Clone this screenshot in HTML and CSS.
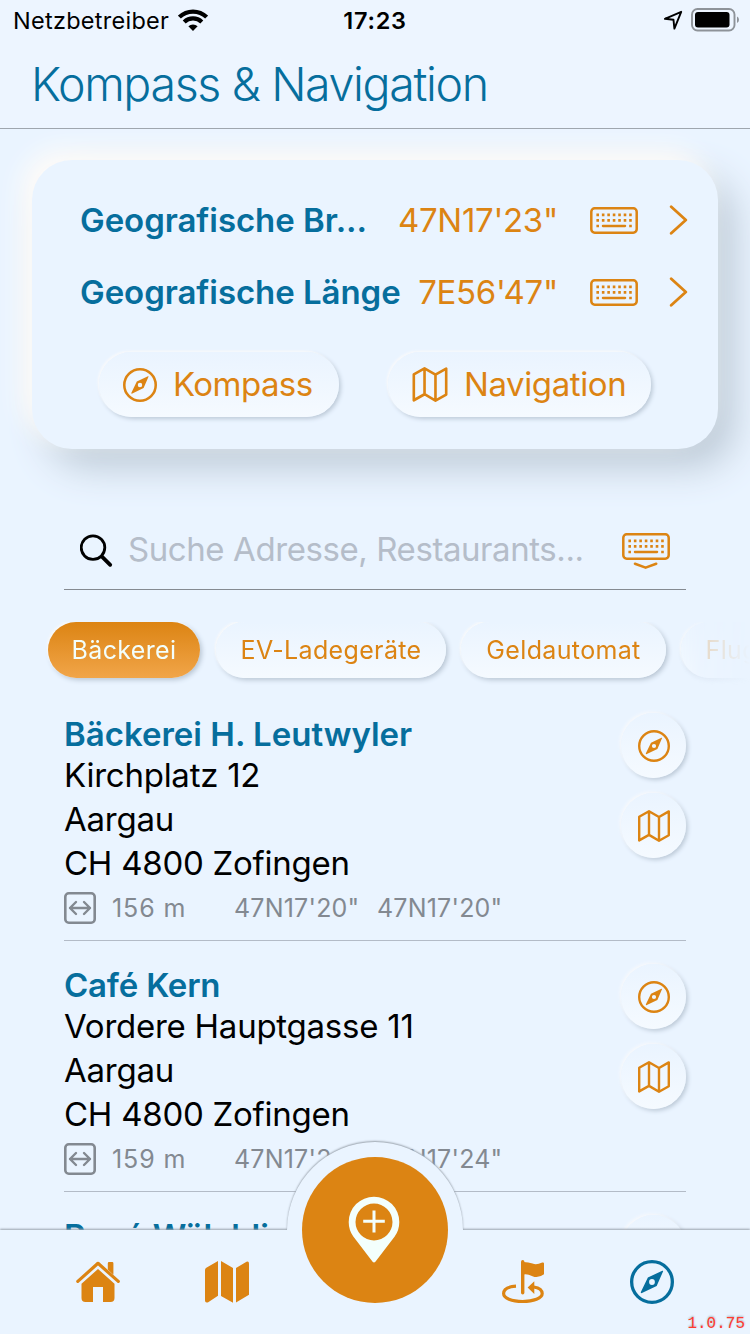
FILE: index.html
```html
<!DOCTYPE html>
<html lang="de">
<head>
<meta charset="utf-8">
<title>Kompass &amp; Navigation</title>
<link rel="stylesheet" href="styles.css">
</head>
<body>
<svg class="defs" width="0" height="0">
  <symbol id="compass" viewBox="0 0 32 32">
    <circle cx="16" cy="16" r="14.8" fill="none" stroke="currentColor" stroke-width="2.4"/>
    <path fill="currentColor" fill-rule="evenodd" d="M24.1 8.1 19.4 18.9 8.3 24.2Q7.6 24.1 7.9 23.3L13 12.8 23.5 7.8Q24.2 7.6 24.1 8.1ZM16 13.9a2.1 2.1 0 1 0 0 4.2 2.1 2.1 0 0 0 0-4.2Z"/>
  </symbol>
  <symbol id="map" viewBox="0 0 32 32">
    <path fill="none" stroke="currentColor" stroke-width="2.4" stroke-linejoin="round" d="M1.2 6.8 11 1.3l10 5.7L30.8 1.4v23.8L21 30.8l-10-5.9-9.8 5.500ZM11 1.3V25M21 7v23.8"/>
  </symbol>
  <symbol id="keyboard" viewBox="0 0 48 27">
    <rect x="1.3" y="1.3" width="45.4" height="24.4" rx="3.4" fill="none" stroke="currentColor" stroke-width="2.5"/>
    <path stroke="currentColor" stroke-width="2.7" stroke-dasharray="2.6 2.86" d="M6.4 7.9h35.6M6.4 13.4h35.6"/>
    <path stroke="currentColor" stroke-width="2.5" d="M6.4 19H9M39.2 19h2.6"/>
    <path stroke="currentColor" stroke-width="2.3" stroke-linecap="round" d="M12.9 19h22.2"/>
  </symbol>
  <symbol id="chevron" viewBox="0 0 18 30">
    <path fill="none" stroke="currentColor" stroke-width="2.8" stroke-linecap="round" stroke-linejoin="round" d="M1.7 1.7 16.3 15 1.7 28.2"/>
  </symbol>
  <symbol id="distance" viewBox="0 0 32 32">
    <rect x="1.3" y="1.3" width="29.4" height="29.4" rx="3.5" fill="none" stroke="currentColor" stroke-width="2.6"/>
    <path fill="none" stroke="currentColor" stroke-width="2.4" stroke-linecap="round" stroke-linejoin="round" d="M6 16h20M12 10 6 16l6 6M20 10l6 6-6 6"/>
  </symbol>
</svg>

<div class="screen">
  <header class="header">
    <div class="status">
      <div class="carrier"><span class="carrier-name">Netzbetreiber</span>
        <svg width="30" height="22" viewBox="0 0 30 22">
          <g fill="none" stroke="#000" stroke-width="4.2"><path d="M1.4 8.1a19.4 19.4 0 0 1 27.2 0"/><path d="M6.2 13a12.6 12.6 0 0 1 17.6 0"/></g>
          <path d="M10.4 17.3a6.6 6.6 0 0 1 9.2 0L15 21.9Z"/>
        </svg>
      </div>
      <div class="clock">17:23</div>
      <div class="indicators">
        <svg width="20" height="20" viewBox="0 0 20 20"><path fill="none" stroke="#000" stroke-width="1.9" stroke-linejoin="round" d="M18.2 1.8 1.9 8.8l8.6 1 .9 8.8Z"/></svg>
        <svg width="48" height="24" viewBox="0 0 48 24">
          <rect x="1" y="1" width="42.5" height="21.5" rx="5.5" fill="none" stroke="#8e9399" stroke-width="1.9"/>
          <rect x="4" y="4" width="34.5" height="15.5" rx="3"/>
          <path fill="#8e9399" d="M46 8.5q2 1 2 3.2t-2 3.2Z"/>
        </svg>
      </div>
    </div>
    <h1 class="title">Kompass &amp; Navigation</h1>
  </header>

  <main class="content">
    <section class="card">
      <div class="coord">
        <span class="coord-label">Geografische Br...</span><span class="coord-value">47N17'23"</span>
        <svg class="kbd"><use href="#keyboard"/></svg><svg class="chev"><use href="#chevron"/></svg>
      </div>
      <div class="coord">
        <span class="coord-label">Geografische Länge</span><span class="coord-value">7E56'47"</span>
        <svg class="kbd"><use href="#keyboard"/></svg><svg class="chev"><use href="#chevron"/></svg>
      </div>
      <div class="actions">
        <button class="pill kompass"><svg class="pill-icon"><use href="#compass"/></svg><span>Kompass</span></button>
        <button class="pill navigation"><svg class="pill-icon map"><use href="#map"/></svg><span>Navigation</span></button>
      </div>
    </section>

    <div class="search">
      <svg width="34" height="34" viewBox="0 0 34 34"><circle cx="13" cy="13.6" r="11.8" fill="none" stroke="#000" stroke-width="2.8"/><path stroke="#000" stroke-width="3.8" stroke-linecap="round" d="m22.2 22.8 8 8"/></svg>
      <span class="placeholder">Suche Adresse, Restaurants...</span>
      <svg class="kbd-down" width="48" height="37" viewBox="0 0 48 37"><use href="#keyboard" width="48" height="27"/><path fill="none" stroke="currentColor" stroke-width="2.6" stroke-linecap="round" stroke-linejoin="round" d="m13 30.8 10.6 3.8 10.6-3.8"/></svg>
    </div>

    <div class="chips">
      <span class="chip active">Bäckerei</span>
      <span class="chip ev">EV-Ladegeräte</span>
      <span class="chip atm">Geldautomat</span>
      <span class="chip airport">Flughafen</span>
    </div>

    <ul class="places">
      <li class="place">
        <div class="info">
          <h2 class="name">Bäckerei H. Leutwyler</h2>
          <p class="line">Kirchplatz 12</p><p class="line">Aargau</p><p class="line">CH 4800 Zofingen</p>
          <div class="meta"><svg class="dist"><use href="#distance"/></svg><span class="metres">156 m</span><span class="pos">47N17'20"</span><span class="pos">47N17'20"</span></div>
        </div>
        <div class="tools"><span class="round"><svg><use href="#compass"/></svg></span><span class="round"><svg><use href="#map"/></svg></span></div>
      </li>
      <li class="place">
        <div class="info">
          <h2 class="name short">Café Kern</h2>
          <p class="line">Vordere Hauptgasse 11</p><p class="line">Aargau</p><p class="line">CH 4800 Zofingen</p>
          <div class="meta"><svg class="dist"><use href="#distance"/></svg><span class="metres">159 m</span><span class="pos">47N17'24"</span><span class="pos">47N17'24"</span></div>
        </div>
        <div class="tools"><span class="round"><svg><use href="#compass"/></svg></span><span class="round"><svg><use href="#map"/></svg></span></div>
      </li>
      <li class="place">
        <div class="info"><h2 class="name">René Wälchli</h2></div>
        <div class="tools"><span class="round"></span></div>
      </li>
    </ul>
  </main>

  <nav class="tabs">
    <div class="bump"></div>
    <div class="tab"><svg width="44" height="42" viewBox="0 0 44 42">
      <path fill="none" stroke="currentColor" stroke-width="3.2" stroke-linecap="round" stroke-linejoin="round" d="M1.8 20.4 22 2.3l20.3 18.1"/>
      <path fill="currentColor" d="M31.8 8.6V2.2q0-1.2 1.2-1.2h3.2q1.2 0 1.2 1.2v11.500ZM22 8 38.500 22.800V37q0 4-4 4H27V26H17v15H9.500q-4 0-4-4V22.800Z"/>
    </svg></div>
    <div class="tab"><svg width="44" height="42" viewBox="0 0 44 42">
      <path fill="currentColor" d="M0 9Q0 7.4 1.3 6.7L13 0v34.7L3.2 41.2Q0 42.2 0 39.5ZM16 0l12 7v34.8l-12-6.9ZM31 7 41.5.8Q44-.2 44 2.7v31L31 41.6Z"/>
    </svg></div>
    <div class="fab"><svg width="52" height="68" viewBox="0 0 52 68">
      <path fill="#f3fffc" fill-rule="evenodd" d="M26 .7A25.3 25.3 0 0 0 .7 26q0 8 4.6 14.6L24.6 65.8q1.4 1.6 2.8 0L46.7 40.6Q51.3 34 51.3 26A25.3 25.3 0 0 0 26 .7ZM26 7.5a18.5 18.5 0 1 1 0 37 18.5 18.5 0 0 1 0-37Z"/>
      <path stroke="#f3fffc" stroke-width="3" d="M15.2 25.3h21.6M26 14.4v22"/>
    </svg></div>
    <div class="tab"><svg width="44" height="46" viewBox="0 0 44 46">
      <path fill="none" stroke="currentColor" stroke-width="3.4" stroke-linecap="round" d="M21.7 2.7v31"/>
      <path fill="currentColor" d="M22.500 3q5 0 9 1.600t9.700-1q1.800-.6 1.800 1v10.600q-6 4.500-11.500 2t-9-1.600ZM33.300 22.200v12.800L26.600 28.600Z"/>
      <path fill="none" stroke="currentColor" stroke-width="3.2" d="M15 27.2C7 27.6 2.6 30.500 2.6 34.600c0 4.600 8 7.900 19 7.900s19.600-3.300 19.600-7.900c0-3.500-3-5.700-8.500-6.600"/>
    </svg></div>
    <div class="tab current"><svg width="44" height="44"><use href="#compass"/></svg></div>
    <span class="version">1.0.75</span>
  </nav>
</div>
</body>
</html>
```
FILE: styles.css
```css
* { box-sizing: border-box; }
body { margin: 0; font-family: Inter, "Liberation Sans", sans-serif; color: #000; }
h1, h2, p, ul { margin: 0; padding: 0; font-weight: 400; }
svg { display: block; flex: none; }
.defs { position: absolute; }
.screen { position: relative; width: 750px; height: 1334px; overflow: hidden; background: #eaf4ff; display: flex; flex-direction: column; white-space: nowrap; }

.header { height: 129px; flex: none; background: #edf5ff; border-bottom: 1px solid #9fa6ae; position: relative; z-index: 1; }
.status { height: 40px; display: grid; grid-template-columns: 1fr auto 1fr; align-items: center; padding: 0 11px 0 13px; font-size: 23.5px; }
.carrier { display: flex; align-items: center; gap: 9px; letter-spacing: .27px; }
.clock { font-weight: 600; letter-spacing: .7px; margin-left: -2px; }
.indicators { display: flex; justify-content: flex-end; align-items: center; gap: 8px; }
.title { padding-left: 31px; font-size: 46.5px; line-height: 88px; font-weight: 300; letter-spacing: -1.34px; color: #066e9d; }

.content { height: 1101px; overflow: hidden; flex: none; padding-top: 31px; }
.card { width: 686px; height: 289px; margin-left: 32px; padding: 24px 30px 0 48px; border-radius: 40px; background: #eaf4ff; box-shadow: -10px -10px 26px #fffcf8, 16px 18px 38px #bcc9d6; }
.coord { height: 72px; display: flex; align-items: center; font-size: 33px; }
.coord-label { flex: 1; font-weight: 600; color: #066e9d; letter-spacing: -.06px; }
.coord-value { color: #dc8413; margin-right: 32px; letter-spacing: -.3px; }
.kbd { width: 48px; height: 27px; color: #dc8413; margin-right: 31px; }
.chev { width: 19px; height: 30px; color: #dc8413; }
.actions { display: flex; gap: 49px; padding: 24px 0 0 19px; }
.pill { width: 240px; height: 65px; border: 0; border-radius: 33px; padding: 0 0 0 24px; display: flex; align-items: center; gap: 16px; font: 400 33px Inter, sans-serif; letter-spacing: -.55px; color: #dc8413; background: linear-gradient(#eaf4ff, #f5faff); box-shadow: -1.5px -1.5px 2px #f7f9fc, 2px 2px 4px #bdcad8; }
.pill span { padding-bottom: 2px; }
.pill.navigation { width: 263px; gap: 16px; letter-spacing: -.4px; }
.pill-icon { width: 34px; height: 34px; }
.pill-icon.map { width: 36px; height: 35px; }

.search { width: 622px; height: 81px; margin: 60px 0 0 64px; border-bottom: 1px solid #858a91; display: flex; align-items: center; padding: 3px 16px 0; font-size: 33px; color: #b5bdc9; }
.placeholder { flex: 1; margin-left: 14px; padding-bottom: 4px; letter-spacing: -.42px; }
.kbd-down { color: #dc8413; margin-top: 2px; }

.chips { display: flex; gap: 15px; height: 80px; margin-top: 32px; padding-left: 48px; overflow: hidden; -webkit-mask-image: linear-gradient(90deg, #000 675px, rgba(0,0,0,.25) 700px, transparent 750px); mask-image: linear-gradient(90deg, #000 675px, rgba(0,0,0,.25) 700px, transparent 750px); }
.chip { flex: none; height: 56px; border-radius: 28px; text-align: center; font-size: 25px; letter-spacing: .35px; line-height: 57px; color: #dc8413; background: linear-gradient(#eaf4ff, #f5faff); box-shadow: -1.5px -1.5px 2px #f7f9fc, 2px 2px 5px #b8c5d3; }
.chip.active { width: 152px; color: #f3fffc; background: linear-gradient(#dc8413, #f1a549); margin-right: 1px; }
.chip.ev { width: 230px; }
.chip.atm { width: 205px; }
.chip.airport { width: 170px; }

.places { list-style: none; padding-left: 64px; width: 686px; margin-top: -12px; }
.place { height: 251px; display: flex; justify-content: space-between; border-bottom: 1px solid #b3bbc7; }
.info { padding-top: 22px; font-size: 33px; }
.name { font-weight: 600; font-size: 33px; line-height: 44px; height: 41px; color: #066e9d; }
.name.short { letter-spacing: -.2px; }
.line { line-height: 44px; letter-spacing: -.25px; }
.meta { display: flex; align-items: center; height: 46px; font-size: 25px; letter-spacing: .2px; color: #838991; }
.dist { width: 32px; height: 32px; }
.metres { width: 122px; margin-left: 16px; letter-spacing: .9px; }
.pos { width: 143px; }
.tools { display: flex; flex-direction: column; gap: 15px; padding-top: 23px; }
.round { width: 65px; height: 65px; padding: 1px 0 0 1px; border-radius: 50%; display: grid; place-items: center; color: #dc8413; background: linear-gradient(#eaf4ff, #f5faff); box-shadow: -1.5px -1.5px 3px #f7f9fc, 2px 2px 4px #bdcad8; }
.round svg { width: 32px; height: 32px; }

.tabs { position: absolute; left: 0; right: 0; bottom: 0; height: 104px; background: #eaf4ff; box-shadow: 0 -1px 2px #9aa3ad; display: grid; grid-template-columns: 196px 62px 234px 62px 196px; align-items: center; justify-items: center; color: #dc8413; }
.bump { position: absolute; left: 285px; top: -92px; width: 180px; height: 92px; overflow: hidden; }
.bump::before { content: ""; position: absolute; left: 2px; top: 4px; width: 176px; height: 176px; border-radius: 50%; background: #eaf4ff; box-shadow: 0 -1px 2px #9aa3ad; }
.fab { position: relative; align-self: start; margin-top: -73px; width: 146px; height: 146px; padding-right: 2px; border-radius: 50%; background: #dc8413; display: grid; place-items: center; }
.tab.current { color: #066e9d; }
.version { position: absolute; right: 5px; bottom: 0; font: 16px/20px "Liberation Mono", monospace; color: #ff3b30; text-shadow: 0 -1px 2px #a6afb9; }
```
